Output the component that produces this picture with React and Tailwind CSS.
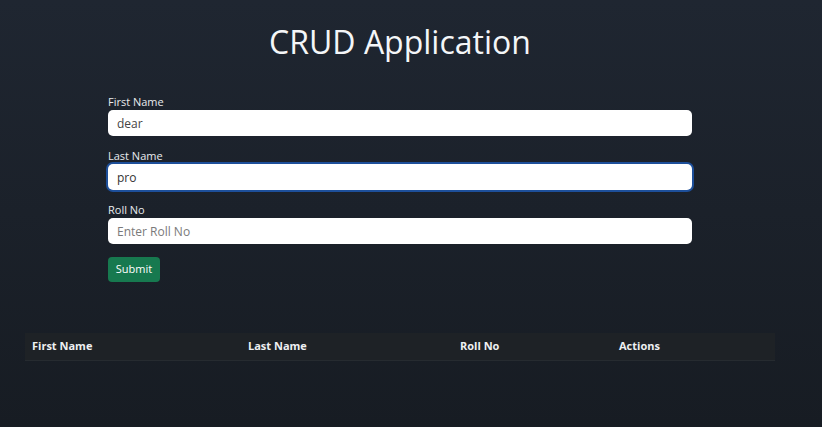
import React, { useState } from "react";

const App = () => {
  const [firstName, setFirstName] = useState("dear");
  const [lastName, setLastName] = useState("pro");
  const [rollNo, setRollNo] = useState("");

  return (
    <div
      className="w-screen h-[427px] overflow-hidden bg-gradient-to-b from-[#1f2631] to-[#171c23] text-white"
      style={{ fontFamily: '"Open Sans", "Noto Sans", sans-serif' }}
    >
      {/* Title */}
      <h1 className="pt-[22px] pr-[22px] text-center text-[32px] leading-[40px] font-normal text-[#f4f6f8]">
        CRUD Application
      </h1>

      {/* Form */}
      <form
        onSubmit={(e) => e.preventDefault()}
        className="mt-[33px] ml-[108px] w-[584px] flex flex-col"
      >
        <label className="text-[11px] leading-[14px] text-[#e8eaed]">First Name</label>
        <input
          value={firstName}
          onChange={(e) => setFirstName(e.target.value)}
          className="mt-[1px] h-[26px] rounded-[5px] bg-white px-[9px] text-[12px] text-[#444] outline-none"
        />

        <label className="mt-[13px] text-[11px] leading-[14px] text-[#e8eaed]">Last Name</label>
        <input
          value={lastName}
          onChange={(e) => setLastName(e.target.value)}
          className="mt-[1px] h-[26px] rounded-[5px] bg-white px-[9px] text-[12px] text-[#333] outline-none ring-2 ring-[#1d4f9a]"
        />

        <label className="mt-[13px] text-[11px] leading-[14px] text-[#e8eaed]">Roll No</label>
        <input
          value={rollNo}
          onChange={(e) => setRollNo(e.target.value)}
          placeholder="Enter Roll No"
          className="mt-[1px] h-[26px] rounded-[5px] bg-white px-[9px] text-[12px] text-[#333] placeholder:text-[#7a7a7a] outline-none"
        />

        <div>
          <button
            type="submit"
            className="mt-[13px] h-[25px] w-[52px] rounded-[4px] bg-[#17794f] text-[11px] text-white"
          >
            Submit
          </button>
        </div>
      </form>

      {/* Table */}
      <table className="mt-[51px] ml-[25px] w-[750px] text-left text-[11px] font-bold text-[#eef0f2]">
        <thead>
          <tr className="h-[27px] bg-[#1e2226] border-b border-[#262b30]">
            <th className="w-[216px] pl-[7px]">First Name</th>
            <th className="w-[212px] pl-[7px]">Last Name</th>
            <th className="w-[159px] pl-[7px]">Roll No</th>
            <th className="pl-[7px]">Actions</th>
          </tr>
        </thead>
        <tbody></tbody>
      </table>
    </div>
  );
};

export default App;
